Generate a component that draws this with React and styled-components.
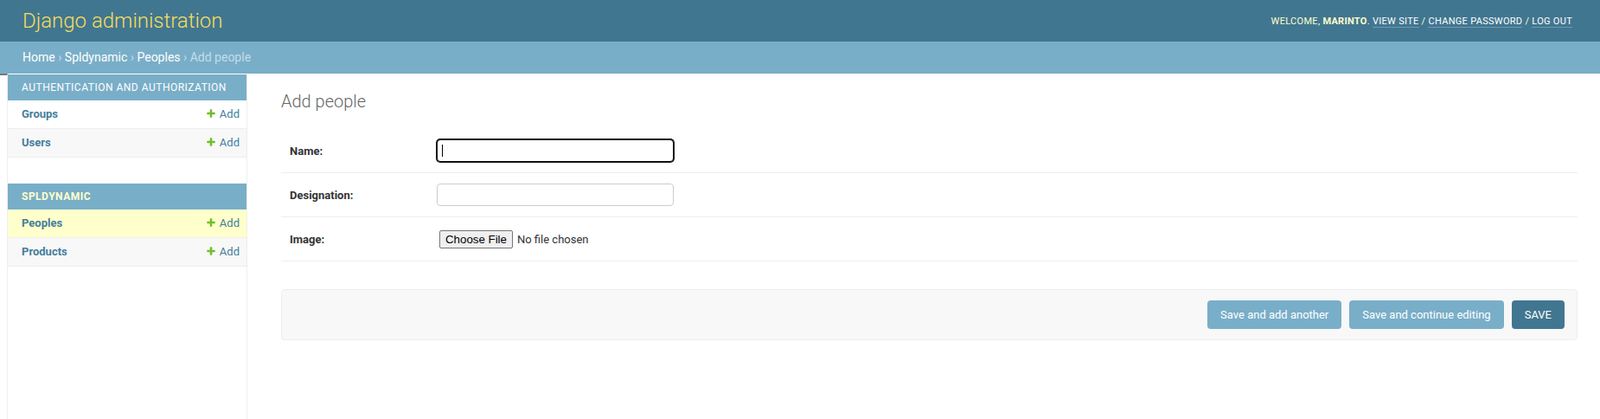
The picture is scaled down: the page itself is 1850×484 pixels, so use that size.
import React from 'react';
import styled, {createGlobalStyle} from 'styled-components';

const GlobalStyle = createGlobalStyle`
  html, body {
    margin: 0;
    padding: 0;
  }

  body {
    font-family: Roboto, "Liberation Sans", sans-serif;
    font-size: 14px;
    color: #333;
    background: #fff;
  }

  #root {
    height: 100vh;
    overflow: hidden;
    display: flex;
    flex-direction: column;
  }

  a {
    text-decoration: none;
  }
`;

const Header = styled.div`
  display: flex;
  justify-content: space-between;
  align-items: center;
  height: 48px;
  padding: 0 32px 0 26px;
  background: #417690;
  color: #ffc;
`;

const Branding = styled.h1`
  margin: 0;
  font-size: 24px;
  font-weight: 300;
  color: #f5dd5d;
`;

const UserTools = styled.div`
  font-size: 11px;
  letter-spacing: 0.3px;
  text-transform: uppercase;
  color: #ffc;

  strong {
    font-weight: 700;
  }
`;

const ToolLink = styled.a`
  color: #fff;
  border-bottom: 1px solid rgba(255, 255, 255, 0.25);
`;

const Breadcrumbs = styled.div`
  padding: 10px 26px;
  background: #79aec8;
  font-size: 14px;
  line-height: 17px;
  color: #c4dce8;

  a {
    color: #fff;
  }
`;

const Main = styled.div`
  display: flex;
  flex: 1;
  min-height: 0;
`;

// thin collapsed toggle left of the nav sidebar
const SidebarToggle = styled.div`
  flex: 0 0 9px;
  box-sizing: border-box;
  border-top: 2px solid #777;
  border-right: 1px solid #eee;
`;

const Sidebar = styled.nav`
  flex: 0 0 276px;
  border-top: 1px solid transparent;
  border-right: 1px solid #eee;
`;

const AppModule = styled.table`
  width: 100%;
  border-collapse: collapse;
  margin-bottom: 30px;

  caption {
    padding: 8px 8px 8px 16px;
    background: #79aec8;
    color: ${props => (props.$current ? '#ffc' : '#fff')};
    font-weight: ${props => (props.$current ? 700 : 400)};
    font-size: 12px;
    line-height: 14px;
    letter-spacing: 0.5px;
    text-transform: uppercase;
    text-align: left;
  }
`;

const ModelRow = styled.tr`
  background: ${props => (props.$current ? '#ffc' : props.$even ? '#f8f8f8' : '#fff')};

  th, td {
    height: 16px;
    font-size: 13px;
    line-height: 16px;
    border-bottom: 1px solid #eee;
    padding: 8px;
    vertical-align: top;
  }

  th {
    width: 100%;
    padding-left: 16px;
    text-align: left;
    font-weight: 700;
  }

  td {
    white-space: nowrap;
  }

  a {
    color: #447e9b;
  }
`;

const AddLink = styled.a`
  display: inline-block;
  font-weight: 400;

  svg {
    width: 12px;
    height: 12px;
    margin-right: 4px;
    vertical-align: -1px;
  }
`;

const Content = styled.div`
  flex: 1;
  padding: 20px 26px 0 39px;
`;

const Title = styled.h1`
  margin: 0 0 20px;
  font-size: 20px;
  line-height: 24px;
  font-weight: 300;
  color: #666;
`;

const Fieldset = styled.div`
  margin-bottom: 32px;
`;

const FormRow = styled.div`
  display: flex;
  align-items: center;
  min-height: 30px;
  padding: 10px;
  border-bottom: 1px solid #eee;
  font-size: 13px;
`;

const Label = styled.label`
  flex: 0 0 160px;
  padding-right: 10px;
  font-weight: 700;
  color: #333;
`;

const InputWrap = styled.div`
  position: relative;
  display: flex;
`;

const TextInput = styled.input`
  box-sizing: border-box;
  width: 274px;
  height: 26px;
  margin: 2px 0;
  padding: 5px 6px;
  border: 1px solid ${props => (props.$focused ? '#101010' : '#ccc')};
  border-radius: 4px;
  box-shadow: ${props => (props.$focused ? '0 0 0 1px #101010' : 'none')};
  font-family: Roboto, "Liberation Sans", sans-serif;
  font-size: 13px;
  color: #333;
  outline: none;
`;

// text caret shown in the focused field
const Caret = styled.span`
  position: absolute;
  left: 6px;
  top: 8px;
  width: 1px;
  height: 14px;
  background: #000;
`;

const FileControl = styled.div`
  display: flex;
  align-items: center;
  gap: 5px;
  margin-left: 3px;
  font-size: 13px;
  color: #333;
`;

const FileButton = styled.button`
  height: 21px;
  padding: 1px 6px;
  border: 1px solid #767676;
  border-radius: 2px;
  background: #efefef;
  font-family: "Liberation Sans", Arial, sans-serif;
  font-size: 13.3px;
  color: #000;
`;

const SubmitRow = styled.div`
  display: flex;
  justify-content: flex-end;
  gap: 9px;
  padding: 12px 14px;
  background: #f8f8f8;
  border: 1px solid #eee;
  border-radius: 4px;
`;

const SubmitButton = styled.button`
  height: 33px;
  padding: 9px 15px;
  border: none;
  border-radius: 4px;
  background: ${props => (props.$default ? '#417690' : '#79aec8')};
  color: #fff;
  font-family: Roboto, "Liberation Sans", sans-serif;
  font-size: 13px;
  line-height: 15px;
  text-transform: ${props => (props.$default ? 'uppercase' : 'none')};
`;

const PlusIcon = () => (
    <svg viewBox="0 0 1792 1792">
        <path
            fill="#70bf2b"
            d="M1600 796v192q0 40-28 68t-68 28h-416v416q0 40-28 68t-68 28h-192q-40 0-68-28t-28-68v-416h-416q-40 0-68-28t-28-68v-192q0-40 28-68t68-28h416v-416q0-40 28-68t68-28h192q40 0 68 28t28 68v416h416q40 0 68 28t28 68z"
        />
    </svg>
);

const apps = [
    {name: 'Authentication and Authorization', models: ['Groups', 'Users']},
    {name: 'Spldynamic', current: true, models: ['Peoples', 'Products']},
];

export default function App() {
    return (
        <>
            <GlobalStyle/>
            <Header>
                <Branding>Django administration</Branding>
                <UserTools>
                    Welcome, <strong>marinto</strong>. <ToolLink href="#">View site</ToolLink> / <ToolLink href="#">Change password</ToolLink> / <ToolLink href="#">Log out</ToolLink>
                </UserTools>
            </Header>
            <Breadcrumbs>
                <a href="#">Home</a> › <a href="#">Spldynamic</a> › <a href="#">Peoples</a> › Add people
            </Breadcrumbs>
            <Main>
                <SidebarToggle/>
                <Sidebar>
                    {apps.map(app => (
                        <AppModule key={app.name} $current={app.current}>
                            <caption>{app.name}</caption>
                            <tbody>
                                {app.models.map((model, i) => (
                                    <ModelRow key={model} $even={i % 2 === 1} $current={model === 'Peoples'}>
                                        <th scope="row"><a href="#">{model}</a></th>
                                        <td><AddLink href="#"><PlusIcon/>Add</AddLink></td>
                                    </ModelRow>
                                ))}
                            </tbody>
                        </AppModule>
                    ))}
                </Sidebar>
                <Content>
                    <Title>Add people</Title>
                    <Fieldset>
                        <FormRow>
                            <Label htmlFor="id_name">Name:</Label>
                            <InputWrap>
                                <TextInput id="id_name" type="text" $focused/>
                                <Caret/>
                            </InputWrap>
                        </FormRow>
                        <FormRow>
                            <Label htmlFor="id_designation">Designation:</Label>
                            <TextInput id="id_designation" type="text"/>
                        </FormRow>
                        <FormRow>
                            <Label htmlFor="id_image">Image:</Label>
                            <FileControl>
                                <FileButton type="button">Choose File</FileButton>
                                <span>No file chosen</span>
                            </FileControl>
                        </FormRow>
                    </Fieldset>
                    <SubmitRow>
                        <SubmitButton>Save and add another</SubmitButton>
                        <SubmitButton>Save and continue editing</SubmitButton>
                        <SubmitButton $default>Save</SubmitButton>
                    </SubmitRow>
                </Content>
            </Main>
        </>
    );
}
